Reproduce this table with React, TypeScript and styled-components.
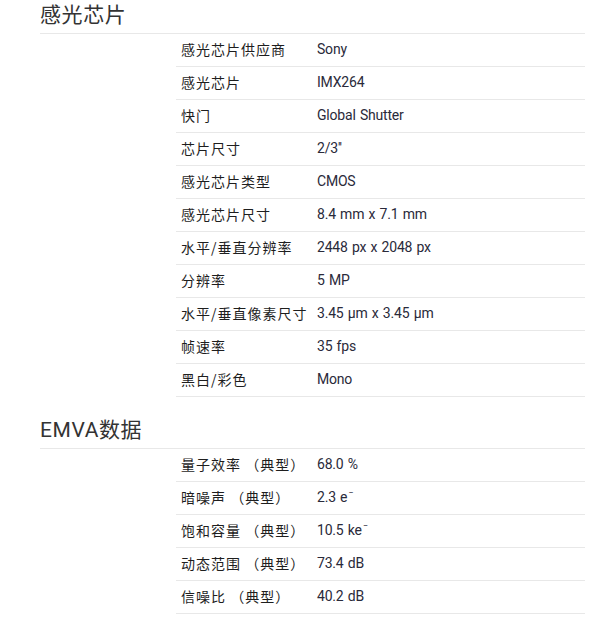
import React from "react";
import styled, { createGlobalStyle } from "styled-components";

const Global = createGlobalStyle`
  html, body { margin: 0; padding: 0; background: #fff; }
  body { font-family: Roboto, "Noto Sans CJK SC", sans-serif; }
`;

const Page = styled.div`
  width: 545px;
  margin-left: 40px;
`;

const Section = styled.section<{ $first?: boolean }>`
  margin-top: ${(p) => (p.$first ? "0" : "18px")};
`;

const Heading = styled.h2`
  margin: 0;
  height: 33px;
  line-height: 30px;
  font-size: 21px;
  font-weight: 400;
  color: #333;
  font-family: Roboto, "Noto Sans CJK SC", sans-serif;
  letter-spacing: 0.6px;
  border-bottom: 1px solid #e8e8e8;
`;

const Table = styled.div`
  margin-left: 136px;
  display: flex;
  flex-direction: column;
`;

const Row = styled.div`
  box-sizing: border-box;
  display: grid;
  grid-template-columns: 136px 1fr;
  height: 33px;
  padding-bottom: 2px;
  align-items: center;
  border-bottom: 1px solid #e8e8e8;
`;

const Label = styled.div`
  padding-left: 5px;
  font-family: "Noto Sans CJK SC", sans-serif;
  font-size: 14px;
  line-height: 20px;
  letter-spacing: 1px;
  color: #1e1e1e;
  white-space: nowrap;
`;

const Value = styled.div`
  padding-left: 5px;
  font-family: Roboto, "Noto Sans CJK SC", sans-serif;
  font-size: 14px;
  line-height: 20px;
  letter-spacing: -0.2px;
  word-spacing: 1px;
  color: #2a2a3a;
  white-space: nowrap;
`;

const Sup = styled.sup`
  font-size: 9px;
  vertical-align: 6px;
  line-height: 0;
  margin-left: 1px;
`;

type Item = { label: string; value: React.ReactNode };

const sensor: Item[] = [
  { label: "感光芯片供应商", value: "Sony" },
  { label: "感光芯片", value: "IMX264" },
  { label: "快门", value: "Global Shutter" },
  { label: "芯片尺寸", value: "2/3''" },
  { label: "感光芯片类型", value: "CMOS" },
  { label: "感光芯片尺寸", value: "8.4 mm x 7.1 mm" },
  { label: "水平/垂直分辨率", value: "2448 px x 2048 px" },
  { label: "分辨率", value: "5 MP" },
  { label: "水平/垂直像素尺寸", value: "3.45 µm x 3.45 µm" },
  { label: "帧速率", value: "35 fps" },
  { label: "黑白/彩色", value: "Mono" },
];

const emva: Item[] = [
  { label: "量子效率 （典型）", value: "68.0 %" },
  {
    label: "暗噪声 （典型）",
    value: (
      <>
        2.3 e<Sup>−</Sup>
      </>
    ),
  },
  {
    label: "饱和容量 （典型）",
    value: (
      <>
        10.5 ke<Sup>−</Sup>
      </>
    ),
  },
  { label: "动态范围 （典型）", value: "73.4 dB" },
  { label: "信噪比 （典型）", value: "40.2 dB" },
];

const SpecSection = ({ title, items, first }: { title: string; items: Item[]; first?: boolean }) => (
  <Section $first={first}>
    <Heading>{title}</Heading>
    <Table>
      {items.map((it) => (
        <Row key={it.label}>
          <Label>{it.label}</Label>
          <Value>{it.value}</Value>
        </Row>
      ))}
    </Table>
  </Section>
);

export default function App() {
  return (
    <>
      <Global />
      <Page>
        <SpecSection title="感光芯片" items={sensor} first />
        <SpecSection title="EMVA数据" items={emva} />
      </Page>
    </>
  );
}
